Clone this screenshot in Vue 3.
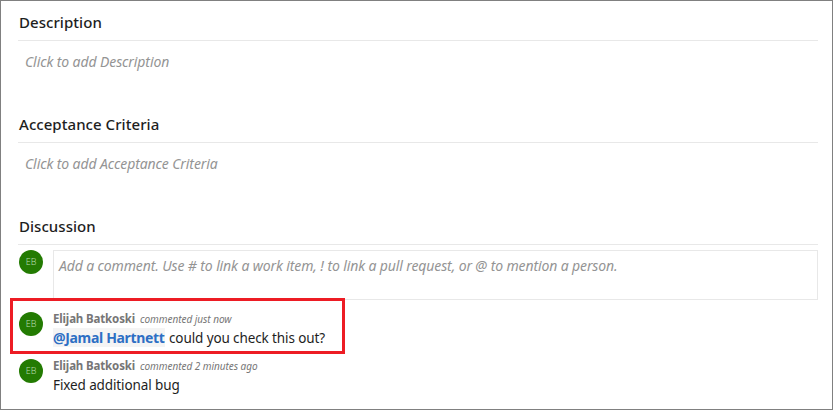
<script setup>
const fields = [
  { title: 'Description', hint: 'Click to add Description' },
  { title: 'Acceptance Criteria', hint: 'Click to add Acceptance Criteria' },
]
const author = 'Elijah Batkoski'
const initials = 'EB'
</script>

<template>
  <main class="form">
    <section v-for="f in fields" :key="f.title" class="field">
      <h2><span>{{ f.title }}</span></h2>
      <p class="hint"><span>{{ f.hint }}</span></p>
    </section>
    <section class="discussion">
      <h2><span>Discussion</span></h2>
      <div class="composer">
        <span class="avatar">{{ initials }}</span>
        <div class="input"><span>Add a comment. Use # to link a work item, ! to link a pull request, or @ to mention a person.</span></div>
      </div>
      <article class="comment marked">
        <span class="avatar">{{ initials }}</span>
        <div class="body">
          <div class="meta"><b>{{ author }}</b><i>commented just now</i></div>
          <div class="text"><a class="mention">@Jamal Hartnett</a><span class="plain">could you check this out?</span></div>
        </div>
      </article>
      <article class="comment">
        <span class="avatar">{{ initials }}</span>
        <div class="body">
          <div class="meta"><b>{{ author }}</b><i>commented 2 minutes ago</i></div>
          <div class="text"><span class="plain">Fixed additional bug</span></div>
        </div>
      </article>
    </section>
  </main>
</template>

<style>
body { margin: 0; background: #fff; }
</style>

<style scoped>
.form {
  box-sizing: border-box;
  width: 833px;
  height: 410px;
  padding: 4px 14px 0 17px;
  border: 1px solid #808080;
  background: #fff;
  font-family: "Noto Sans", "Open Sans", sans-serif;
  overflow: hidden;
  white-space: nowrap;
}
.field { height: 102px; }
h2 {
  box-sizing: border-box;
  height: 36px;
  margin: 0;
  padding-left: 1px;
  border-bottom: 1px solid #e8e8e8;
  font-size: 15px;
  font-weight: 500;
  line-height: 35px;
  letter-spacing: 0.05px;
  color: #1e1e1e;
}
.hint {
  margin: 0;
  padding: 11px 0 0 7px;
  font-size: 14px;
  font-style: italic;
  line-height: 20px;
  letter-spacing: -0.1px;
  color: #949494;
}
.composer { display: flex; margin-top: 5px; padding-left: 1px; }
.avatar {
  flex: none;
  width: 24px;
  height: 24px;
  border-radius: 50%;
  background: #237b02;
  color: #b8dab0;
  font-size: 9px;
  font-weight: 300;
  line-height: 24px;
  text-align: center;
}
.input {
  box-sizing: border-box;
  flex: 1;
  height: 50px;
  margin-left: 10px;
  padding: 5px;
  border: 1px solid #e8e8e8;
  font-size: 14px;
  font-style: italic;
  line-height: 20px;
  letter-spacing: -0.12px;
  color: #949494;
}
.comment {
  display: flex;
  box-sizing: border-box;
  height: 56px;
  padding: 5px 0 0 1px;
}
.marked {
  position: relative;
  z-index: 1;
  width: 335px;
  margin: -2px 0 0 -8px;
  padding: 11px 0 0 6px;
  border: 3px solid #ed1c24;
}
.body { margin-left: 10px; }
.meta { display: flex; align-items: baseline; height: 16px; line-height: 14px; color: #767676; }
.meta b { width: 87px; font-size: 11.5px; font-weight: 700; letter-spacing: -0.15px; }
.meta i { font-size: 10px; letter-spacing: -0.04px; }
.text { display: flex; height: 19px; font-size: 13.5px; line-height: 19px; letter-spacing: -0.11px; color: #1e1e1e; }
.plain { padding-top: 1px; }
.mention { width: 112px; margin-right: 4px; background: #f4f4f4; color: #2d6fc4; font-size: 14px; font-weight: 700; letter-spacing: -0.33px; }
</style>
